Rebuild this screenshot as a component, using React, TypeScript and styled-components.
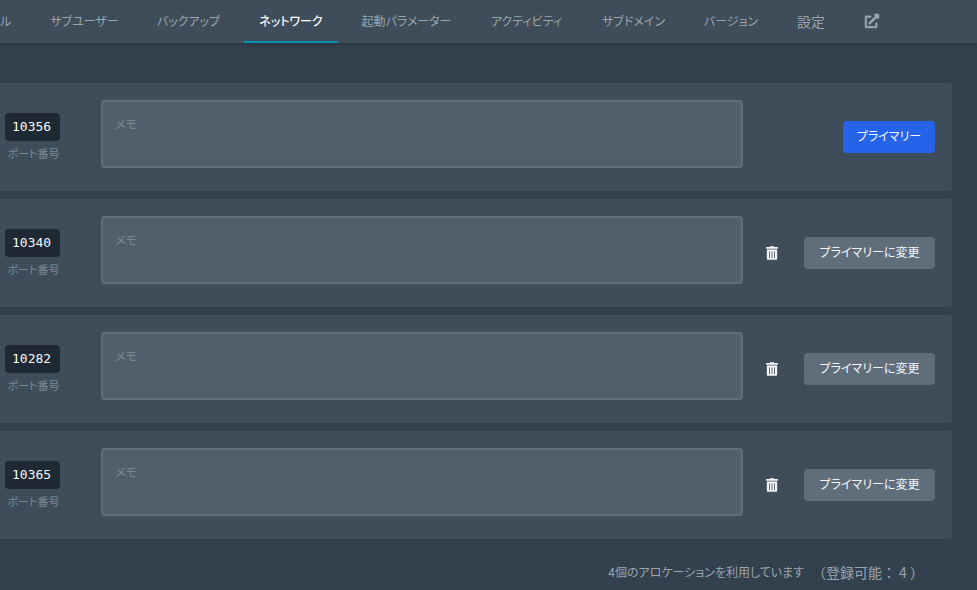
import React from 'react';
import styled, { createGlobalStyle, css } from 'styled-components';
import { FaExternalLinkAlt } from 'react-icons/fa';

const GlobalStyle = createGlobalStyle`
  *, *::before, *::after { box-sizing: border-box; }
  body {
    margin: 0;
    background: #33404d;
    color: #cbd2d9;
    font-family: 'Noto Sans CJK JP', sans-serif;
    font-size: 12px;
    line-height: 20px;
    font-feature-settings: 'palt';
  }
  button, textarea { font: inherit; font-feature-settings: inherit; }
`;

const SubNav = styled.nav`
  display: flex;
  gap: 8px;
  height: 43px;
  overflow: hidden;
  background: #3f4d5a;
`;

const NavShadow = styled.header`
  box-shadow: 0 2px 4px rgba(0, 0, 0, 0.14);
`;

const Tab = styled.a<{ $width: number; $active?: boolean; $large?: boolean }>`
  flex: 0 0 ${(p) => p.$width}px;
  display: flex;
  align-items: center;
  justify-content: center;
  padding-bottom: 2px;
  color: #9aa5b1;
  font-size: ${(p) => (p.$large ? 14 : 12)}px;
  text-decoration: none;
  white-space: nowrap;
  ${(p) =>
    p.$active &&
    css`
      color: #f5f7fa;
      font-weight: 500;
      box-shadow: inset 0 -2px #0891b2;
    `}
`;

const IconTab = styled(Tab)`
  padding-bottom: 1px;
  svg {
    overflow: visible;
    stroke-width: 16px;
  }
`;

const EdgeTab = styled(Tab)`
  justify-content: flex-start;
`;

const Main = styled.main`
  padding: 40px 25px 0 0;
`;

const List = styled.ul`
  display: grid;
  gap: 8px;
  margin: 0;
  padding: 0;
  list-style: none;
`;

const Row = styled.li`
  display: flex;
  align-items: center;
  padding: 17px 17px 17px 5px;
  background: #3f4d5a;
  border-radius: 0 4px 4px 0;
`;

const Port = styled.div`
  flex: 0 0 96px;
  display: flex;
  flex-direction: column;
  align-items: flex-start;
  padding-top: 2px;
`;

const PortCode = styled.code`
  width: 55px;
  padding: 4px 7px;
  border-radius: 4px;
  background: #1f2933;
  color: #f5f7fa;
  font-family: 'DejaVu Sans Mono', monospace;
  font-size: 13px;
`;

const PortLabel = styled.label`
  width: 57px;
  padding-top: 2px;
  color: #7b8793;
  font-size: 11px;
  text-align: center;
  white-space: nowrap;
`;

const NoteCell = styled.div`
  flex: 1;
  height: 74px;
`;

const Note = styled.textarea`
  display: block;
  width: 100%;
  height: 68px;
  padding: 12px;
  border: 2px solid #606d7b;
  border-radius: 4px;
  background: #515f6c;
  color: #cbd2d9;
  resize: none;
  &::placeholder { color: #7b8793; opacity: 1; }
`;

const Actions = styled.div`
  flex: 0 0 192px;
  display: flex;
  align-items: center;
  justify-content: flex-end;
  gap: 16px;
`;

const IconButton = styled.button`
  display: flex;
  padding: 8px 10px;
  border: 0;
  background: transparent;
  color: #f5f7fa;
`;

const TrashSvg = styled.svg`
  width: 12px;
  height: 14px;
  fill: currentColor;
`;

const ActionButton = styled.button<{ $primary?: boolean }>`
  width: ${(p) => (p.$primary ? 92 : 131)}px;
  height: 32px;
  padding: 0 0 2px;
  border: 0;
  border-radius: 4px;
  background: ${(p) => (p.$primary ? '#2563eb' : '#606d7b')};
  color: #f5f7fa;
  white-space: nowrap;
`;

const Summary = styled.p`
  display: flex;
  justify-content: flex-end;
  gap: 8px;
  margin: 0;
  padding: 23px 28px 0 0;
  color: #9aa5b1;
`;

const Quota = styled.span`
  font-size: 14px;
  font-feature-settings: normal;
`;

const tabs = [
  { label: 'サブユーザー', width: 97 },
  { label: 'バックアップ', width: 95 },
  { label: 'ネットワーク', width: 94, active: true },
  { label: '起動パラメーター', width: 121 },
  { label: 'アクティビティ', width: 103 },
  { label: 'サブドメイン', width: 95 },
  { label: 'バージョン', width: 84 },
  { label: '設定', width: 60, large: true },
];

const ports = [
  { port: 10356, primary: true },
  { port: 10340, primary: false },
  { port: 10282, primary: false },
  { port: 10365, primary: false },
];

function TrashIcon() {
  return (
    <TrashSvg viewBox="0 0 448 512" aria-hidden="true">
      <path d="M0 84V56c0-13.3 10.7-24 24-24h112l9.4-18.7c4-8.2 12.3-13.3 21.4-13.3h114.3c9.1 0 17.4 5.1 21.5 13.3L312 32h112c13.3 0 24 10.7 24 24v28c0 6.6-5.4 12-12 12H12C5.4 96 0 90.6 0 84zm416 56v324c0 26.5-21.5 48-48 48H80c-26.5 0-48-21.5-48-48V140c0-6.6 5.4-12 12-12h360c6.6 0 12 5.4 12 12zm-272 68c0-8.8-7.2-16-16-16s-16 7.2-16 16v224c0 8.8 7.2 16 16 16s16-7.2 16-16V208zm96 0c0-8.8-7.2-16-16-16s-16 7.2-16 16v224c0 8.8 7.2 16 16 16s16-7.2 16-16V208zm96 0c0-8.8-7.2-16-16-16s-16 7.2-16 16v224c0 8.8 7.2 16 16 16s16-7.2 16-16V208z" />
    </TrashSvg>
  );
}

export default function App() {
  return (
    <>
      <GlobalStyle />
      <NavShadow>
        <SubNav>
          <EdgeTab href="#" $width={28}>ル</EdgeTab>
          {tabs.map((t) => (
            <Tab key={t.label} href="#" $width={t.width} $active={t.active} $large={t.large}>
              {t.label}
            </Tab>
          ))}
          <IconTab href="#" $width={46} $large aria-label="外部リンク">
            <FaExternalLinkAlt />
          </IconTab>
        </SubNav>
      </NavShadow>
      <Main>
        <List>
          {ports.map(({ port, primary }) => (
            <Row key={port}>
              <Port>
                <PortCode>{port}</PortCode>
                <PortLabel htmlFor={`note-${port}`}>ポート番号</PortLabel>
              </Port>
              <NoteCell>
                <Note id={`note-${port}`} placeholder="メモ" />
              </NoteCell>
              <Actions>
                {!primary && (
                  <IconButton type="button" aria-label="削除">
                    <TrashIcon />
                  </IconButton>
                )}
                <ActionButton type="button" $primary={primary}>
                  {primary ? 'プライマリー' : 'プライマリーに変更'}
                </ActionButton>
              </Actions>
            </Row>
          ))}
        </List>
        <Summary>
          <span>4個のアロケーションを利用しています</span>
          <Quota>（登録可能： 4 ）</Quota>
        </Summary>
      </Main>
    </>
  );
}
